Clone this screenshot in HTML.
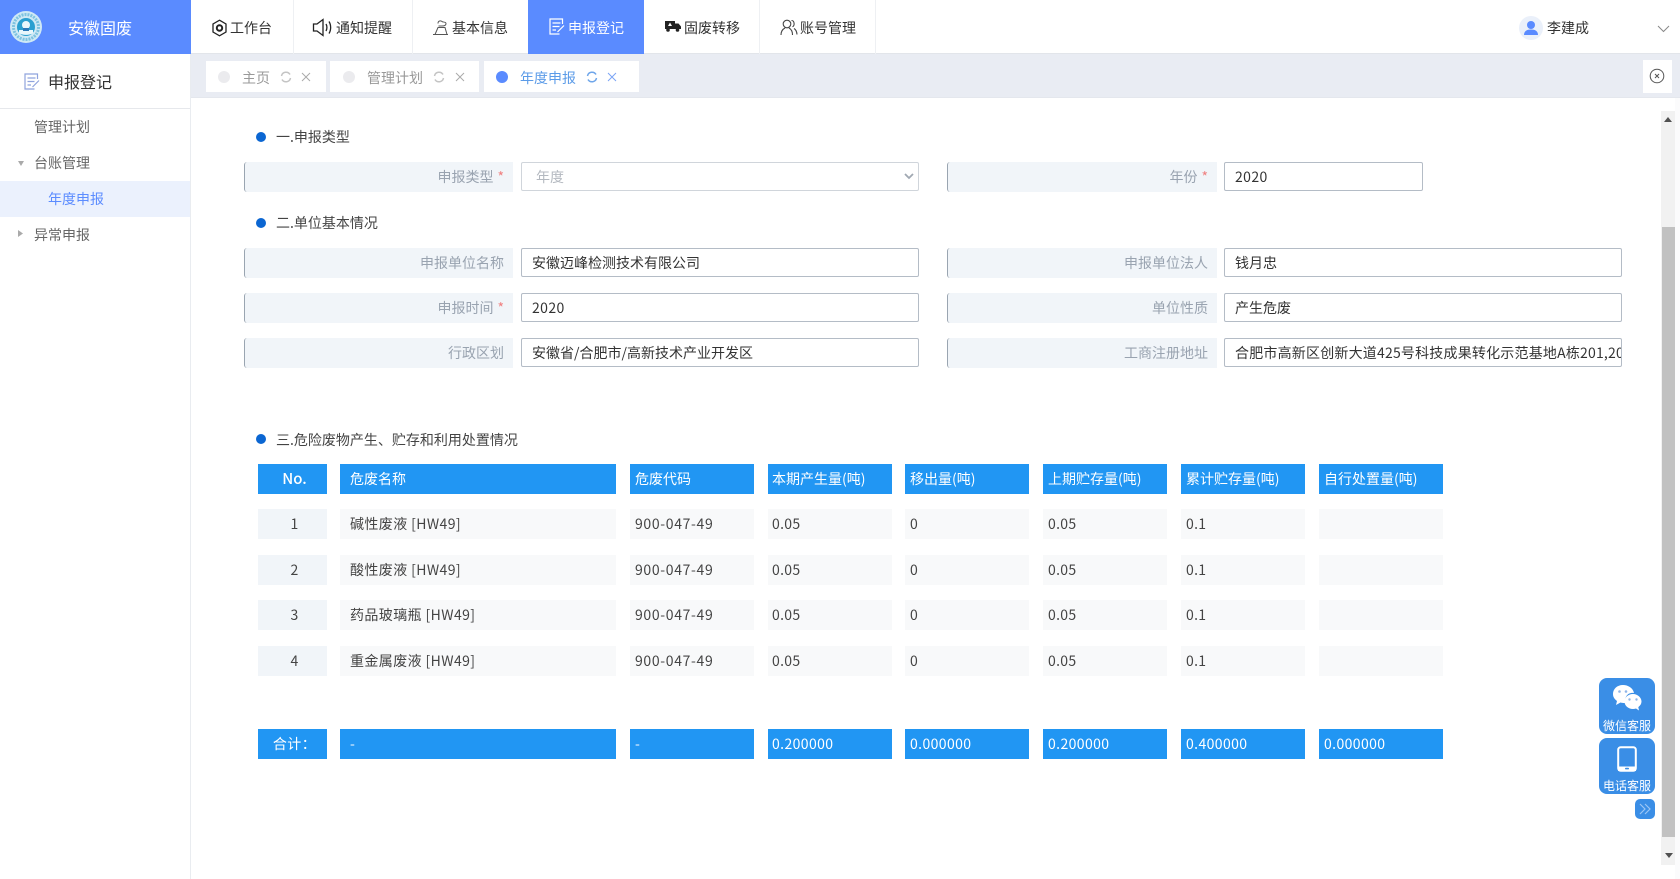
<!DOCTYPE html>
<html lang="zh-CN"><head><meta charset="utf-8"><title>申报登记</title>
<style>
*{box-sizing:border-box}
html,body{margin:0;padding:0;width:1680px;height:879px;overflow:hidden;background:#fff}
body{position:relative;font-family:"Noto Sans CJK SC","Liberation Sans",sans-serif;font-size:14px;color:#333}
.a{position:absolute;white-space:nowrap}
.t{line-height:20px;height:20px}
svg{position:absolute;display:block}
.sep{position:absolute;top:0;width:1px;height:54px;background:#eef0f3}
.nav{color:#333}
.tab{position:absolute;top:61px;height:31px;background:#fff}
.dot{position:absolute;top:71px;width:12px;height:12px;border-radius:50%;background:#ebebee}
.tt{color:#999;top:68px}
.sec{position:absolute;width:10px;height:10px;border-radius:50%;background:#0b66d2;left:256px}
.lb{position:absolute;height:30px;background:#f1f5f9;border-left:1px solid #9aa5b1;border-radius:3px 0 0 3px;text-align:right;padding-right:9px;line-height:31px;color:#99a3b0}
.lb i{font-style:normal;color:#f08080;margin-left:4px}
.in{position:absolute;height:29px;background:#fff;border:1px solid #b4bcc6;border-radius:2px;line-height:29px;padding-left:10px;color:#333;overflow:hidden;white-space:nowrap}
.num{letter-spacing:.4px}
.row{position:absolute;left:0;top:0;width:1500px;height:30px}
.row>div{position:absolute;top:0;height:30px;line-height:30px;overflow:hidden;white-space:nowrap}
.c0{left:258px;width:69px;text-align:center;padding-left:4px}
.c1{left:340px;width:276px;padding-left:10px}
.c2{left:630px;width:124px;padding-left:5px}
.c3{left:768px;width:124px;padding-left:4px}
.c4{left:905px;width:124px;padding-left:5px}
.c5{left:1043px;width:124px;padding-left:5px}
.c6{left:1181px;width:124px;padding-left:5px}
.c7{left:1319px;width:124px;padding-left:5px}
.h>div{background:#2196f3;color:#fff}
.b>div{background:#f8f9fa;color:#444;letter-spacing:.3px}
.b>.c0{background:#f1f5f9}
.b>.c1{letter-spacing:.4px}
.b>.c2{letter-spacing:.65px}
.fl{position:absolute;left:1599px;width:56px;height:56px;background:#3a8ee6;border-radius:8px;color:#fff;font-size:12px;text-align:center}
.fl span{position:absolute;left:0;right:0;top:39px;line-height:17px}
</style></head><body>

<!-- header -->
<div class="a" style="left:0;top:0;width:191px;height:54px;background:#5a8bff"></div>
<svg style="left:10px;top:11px" width="32" height="32" viewBox="0 0 32 32"><circle cx="16" cy="16" r="16" fill="#cfe9f5"/><circle cx="16" cy="16" r="12.5" fill="none" stroke="#7fc3e0" stroke-width="3" stroke-dasharray="2 1"/><circle cx="16" cy="16" r="9" fill="#2a9fd0"/><circle cx="16" cy="14" r="4" fill="#e8f6fb"/><path d="M9 19h14v3c-3 2.500-11 2.500-14 0z" fill="#e8f6fb"/><path d="M13 17h6v3h-6z" fill="#2a78b8"/></svg>
<div class="a t" style="left:68px;top:17px;font-size:16px;color:#fff;line-height:20px">安徽固废</div>
<div class="a" style="left:191px;top:0;width:1489px;height:54px;background:#fff;border-bottom:1px solid #e2e5ea"></div>
<div class="sep" style="left:293px"></div><div class="sep" style="left:412px"></div><div class="sep" style="left:759px"></div><div class="sep" style="left:875px"></div>
<div class="a" style="left:528px;top:0;width:116px;height:54px;background:#5a8bff"></div>

<svg style="left:211px;top:19px" width="17" height="18" viewBox="0 0 17 18" fill="none" stroke="#222"><path d="M8.500 1.200 15 5v8l-6.500 3.800L2 13V5z" stroke-width="1.300"/><circle cx="8.500" cy="9" r="2.700" stroke-width="2"/></svg>
<div class="a t nav" style="left:230px;top:18px">工作台</div>
<svg style="left:312px;top:18px" width="21" height="19" viewBox="0 0 21 19" fill="none" stroke="#222" stroke-width="1.300"><path d="M1.500 6h3.500l6-4.500v16L5 13H1.500z"/><path d="M14 6c1.200 2 1.200 5 0 7M17 3.500c2.200 3.500 2.200 8.500 0 12"/></svg>
<div class="a t nav" style="left:336px;top:18px">通知提醒</div>
<svg style="left:432px;top:18px" width="17" height="18" viewBox="0 0 17 18" fill="none" stroke="#555" stroke-width="1"><path d="M1 16.500h15M3 16.500 6 9.500h7l2 7M6 5.500c0-3 3-3 4-2s4 0 4 2-2 2.500-4 2.500H6.500"/></svg>
<div class="a t nav" style="left:452px;top:18px">基本信息</div>
<svg style="left:549px;top:18px" width="16" height="17" viewBox="0 0 16 17" fill="none" stroke="#fff" stroke-width="1.200"><path d="M13.500 6V1H1v15h9.500M3.500 5h8M3.500 8.500h7M3.500 12h3.500M8.500 14 15 7.500"/></svg>
<div class="a t" style="left:568px;top:18px;color:#fff">申报登记</div>
<svg style="left:664px;top:20px" width="17" height="12" viewBox="0 0 17 12"><path d="M1 1h10v8H1zM11 3.500h3.500L17 6.500V9h-6z" fill="#222"/><circle cx="4" cy="10" r="1.800" fill="#222"/><circle cx="13.500" cy="10" r="1.800" fill="#222"/><path d="M6 2.500 8 6H4z" fill="#fff"/></svg>
<div class="a t nav" style="left:684px;top:18px">固废转移</div>
<svg style="left:780px;top:19px" width="18" height="17" viewBox="0 0 18 17" fill="none" stroke="#444" stroke-width="1.100"><circle cx="7" cy="5" r="3.800"/><path d="M1 16c0-4 2-6 4-7M9 9c2 1 3.500 3 3.500 7M11.500 1.500c3 0 3.500 5 1 6.300M14 9.500c1.700 1 2.800 3 3 6"/></svg>
<div class="a t nav" style="left:800px;top:18px">账号管理</div>

<div class="a" style="left:1519px;top:16px;width:24px;height:24px;border-radius:50%;background:#eaf0fa"></div>
<svg style="left:1524px;top:20px" width="14" height="16" viewBox="0 0 14 16" fill="#5a8bff"><circle cx="7" cy="5" r="4"/><path d="M0 15c0-4 3-5.500 7-5.500s7 1.500 7 5.500z"/></svg>
<div class="a t" style="left:1547px;top:18px;color:#333">李建成</div>
<svg style="left:1657px;top:25px" width="13" height="8" viewBox="0 0 13 8" fill="none" stroke="#888"><path d="M1 1l5.500 5.500L12 1"/></svg>

<!-- tab bar -->
<div class="a" style="left:191px;top:54px;width:1489px;height:44px;background:#e9ecf3;border-bottom:1px solid #e4e7ed"></div>
<div class="tab" style="left:206px;width:120px"></div>
<div class="tab" style="left:330px;width:149px"></div>
<div class="tab" style="left:484px;width:155px"></div>
<div class="dot" style="left:218px"></div>
<div class="a t tt" style="left:242px">主页</div>
<svg style="left:280px;top:71px" width="12" height="12" viewBox="0 0 12 12" fill="none" stroke="#c4c4c4" stroke-width="1.500"><path d="M1.500 5A4.600 4.600 0 0 1 10 3.500M10.500 7A4.600 4.600 0 0 1 2 8.500"/></svg>
<svg style="left:301px;top:72px" width="10" height="10" viewBox="0 0 10 10" stroke="#aaa"><path d="M1 1l8 8M9 1l-8 8"/></svg>
<div class="dot" style="left:343px"></div>
<div class="a t tt" style="left:367px">管理计划</div>
<svg style="left:433px;top:71px" width="12" height="12" viewBox="0 0 12 12" fill="none" stroke="#c4c4c4" stroke-width="1.500"><path d="M1.500 5A4.600 4.600 0 0 1 10 3.500M10.500 7A4.600 4.600 0 0 1 2 8.500"/></svg>
<svg style="left:455px;top:72px" width="10" height="10" viewBox="0 0 10 10" stroke="#aaa"><path d="M1 1l8 8M9 1l-8 8"/></svg>
<div class="dot" style="left:496px;background:#5a8bff"></div>
<div class="a t tt" style="left:520px;color:#5b9be8">年度申报</div>
<svg style="left:586px;top:71px" width="12" height="12" viewBox="0 0 12 12" fill="none" stroke="#6fa6ea" stroke-width="1.500"><path d="M1.500 5A4.600 4.600 0 0 1 10 3.500M10.500 7A4.600 4.600 0 0 1 2 8.500"/></svg>
<svg style="left:607px;top:72px" width="10" height="10" viewBox="0 0 10 10" stroke="#7ba4f5"><path d="M1 1l8 8M9 1l-8 8"/></svg>
<div class="a" style="left:1643px;top:60px;width:29px;height:33px;background:#fff"></div>
<svg style="left:1649px;top:68px" width="16" height="16" viewBox="0 0 16 16" fill="none" stroke="#555"><circle cx="8" cy="8" r="6.800"/><path d="M6 6l4 4M10 6l-4 4"/></svg>

<!-- sidebar -->
<div class="a" style="left:190px;top:54px;width:1px;height:825px;background:#e9ecf0"></div>
<svg style="left:24px;top:73px" width="16" height="17" viewBox="0 0 16 17" fill="none" stroke="#8fa3dd" stroke-width="1.200"><path d="M13.500 6V1H1v15h9.500M3.500 5h8M3.500 8.500h7M3.500 12h3.500M8.500 14 15 7.500"/></svg>
<div class="a" style="left:48px;top:69px;font-size:16px;line-height:24px;color:#333">申报登记</div>
<div class="a" style="left:0;top:108px;width:190px;height:1px;background:#e6e8ec"></div>
<div class="a t" style="left:34px;top:117px;color:#666">管理计划</div>
<svg style="left:18px;top:161px" width="6" height="5" viewBox="0 0 6 5"><path d="M0 0h6L3 5z" fill="#aaa"/></svg>
<div class="a t" style="left:34px;top:153px;color:#666">台账管理</div>
<div class="a" style="left:0;top:181px;width:190px;height:36px;background:#ebf1fd"></div>
<div class="a t" style="left:48px;top:189px;color:#5b8cff">年度申报</div>
<svg style="left:18px;top:230px" width="5" height="7" viewBox="0 0 5 7"><path d="M0 0v7l5-3.500z" fill="#aaa"/></svg>
<div class="a t" style="left:34px;top:225px;color:#666">异常申报</div>

<!-- section 1 -->
<div class="sec" style="top:132px"></div>
<div class="a t" style="left:276px;top:127px;color:#444">一.申报类型</div>
<div class="lb" style="left:244px;top:162px;width:269px">申报类型<i>*</i></div>
<div class="in" style="left:521px;top:162px;width:398px;padding-left:14px;color:#b4b9c0;border-color:#d0d5db">年度</div>
<svg style="left:904px;top:173px" width="10" height="7" viewBox="0 0 10 7" fill="none" stroke="#a0a8b2" stroke-width="1.800"><path d="M1 1l4 4 4-4"/></svg>
<div class="lb" style="left:947px;top:162px;width:270px">年份<i>*</i></div>
<div class="in num" style="left:1224px;top:162px;width:199px">2020</div>

<!-- section 2 -->
<div class="sec" style="top:218px"></div>
<div class="a t" style="left:276px;top:213px;color:#444">二.单位基本情况</div>
<div class="lb" style="left:244px;top:248px;width:269px">申报单位名称</div>
<div class="in" style="left:521px;top:248px;width:398px">安徽迈峰检测技术有限公司</div>
<div class="lb" style="left:947px;top:248px;width:270px">申报单位法人</div>
<div class="in" style="left:1224px;top:248px;width:398px">钱月忠</div>
<div class="lb" style="left:244px;top:293px;width:269px">申报时间<i>*</i></div>
<div class="in num" style="left:521px;top:293px;width:398px">2020</div>
<div class="lb" style="left:947px;top:293px;width:270px">单位性质</div>
<div class="in" style="left:1224px;top:293px;width:398px">产生危废</div>
<div class="lb" style="left:244px;top:338px;width:269px">行政区划</div>
<div class="in" style="left:521px;top:338px;width:398px">安徽省/合肥市/高新技术产业开发区</div>
<div class="lb" style="left:947px;top:338px;width:270px">工商注册地址</div>
<div class="in" style="left:1224px;top:338px;width:398px;letter-spacing:.2px">合肥市高新区创新大道425号科技成果转化示范基地A栋201,203,204室</div>

<!-- section 3 -->
<div class="sec" style="top:434px"></div>
<div class="a t" style="left:276px;top:430px;color:#444">三.危险废物产生、贮存和利用处置情况</div>

<div class="row h" style="top:464px">
<div class="c0" style="font-weight:500;font-size:15px">No.</div><div class="c1">危废名称</div><div class="c2">危废代码</div><div class="c3">本期产生量(吨)</div><div class="c4">移出量(吨)</div><div class="c5">上期贮存量(吨)</div><div class="c6">累计贮存量(吨)</div><div class="c7">自行处置量(吨)</div>
</div>
<div class="row b" style="top:509px">
<div class="c0">1</div><div class="c1">碱性废液 [HW49]</div><div class="c2">900-047-49</div><div class="c3">0.05</div><div class="c4">0</div><div class="c5">0.05</div><div class="c6">0.1</div><div class="c7"></div>
</div>
<div class="row b" style="top:555px">
<div class="c0">2</div><div class="c1">酸性废液 [HW49]</div><div class="c2">900-047-49</div><div class="c3">0.05</div><div class="c4">0</div><div class="c5">0.05</div><div class="c6">0.1</div><div class="c7"></div>
</div>
<div class="row b" style="top:600px">
<div class="c0">3</div><div class="c1">药品玻璃瓶 [HW49]</div><div class="c2">900-047-49</div><div class="c3">0.05</div><div class="c4">0</div><div class="c5">0.05</div><div class="c6">0.1</div><div class="c7"></div>
</div>
<div class="row b" style="top:646px">
<div class="c0">4</div><div class="c1">重金属废液 [HW49]</div><div class="c2">900-047-49</div><div class="c3">0.05</div><div class="c4">0</div><div class="c5">0.05</div><div class="c6">0.1</div><div class="c7"></div>
</div>
<div class="row h" style="top:729px;letter-spacing:.4px">
<div class="c0">合计：</div><div class="c1">-</div><div class="c2">-</div><div class="c3">0.200000</div><div class="c4">0.000000</div><div class="c5">0.200000</div><div class="c6">0.400000</div><div class="c7">0.000000</div>
</div>

<!-- scrollbar -->
<div class="a" style="left:1675px;top:98px;width:5px;height:781px;background:#fbfbfc"></div>
<div class="a" style="left:1661px;top:111px;width:14px;height:754px;background:#f1f1f1"></div>
<div class="a" style="left:1662px;top:227px;width:13px;height:610px;background:#c1c1c1"></div>
<svg style="left:1664px;top:117px" width="8" height="6" viewBox="0 0 8 6"><path d="M4 0l4 5H0z" fill="#505050"/></svg>
<svg style="left:1665px;top:853px" width="8" height="6" viewBox="0 0 8 6"><path d="M0 0h8L4 5z" fill="#505050"/></svg>

<!-- floating -->
<div class="fl" style="top:678px">
<svg style="left:13px;top:6px" width="30" height="29" viewBox="0 0 30 29"><path d="M11 1C5 1 1 5 1 10c0 3 1.500 5 4 7l-1 4 4.500-2.500c1.500.4 3 .6 5 .5C12 13 16 8 22 9c-1-5-6-8-11-8z" fill="#fff"/><path d="M21 10c-5 0-8.500 3.500-8.500 7.500S16 25 21 25c1 0 2-.2 3-.5l3 2-.7-3.400c2-1.500 3.200-3.300 3.200-5.600 0-4-4-7.500-8.500-7.500z" fill="#fff"/><g fill="#8fb5e8"><circle cx="7.500" cy="7.500" r="1.300"/><circle cx="14" cy="7.500" r="1.300"/><circle cx="17.500" cy="15.500" r="1.200"/><circle cx="24.500" cy="15.500" r="1.200"/></g></svg>
<span>微信客服</span></div>
<div class="fl" style="top:738px">
<svg style="left:18px;top:8px" width="20" height="26" viewBox="0 0 20 26"><rect x="1.200" y="1.200" width="17.600" height="23.600" rx="2.500" fill="none" stroke="#fff" stroke-width="2"/><rect x="1" y="20.500" width="18" height="4.500" fill="#fff"/><rect x="8" y="21.800" width="4" height="1.600" rx=".8" fill="#3a8ee6"/></svg>
<span>电话客服</span></div>
<div class="a" style="left:1635px;top:799px;width:20px;height:20px;background:#3a8ee6;border-radius:5px"></div>
<svg style="left:1639px;top:803px" width="12" height="12" viewBox="0 0 12 12" fill="none" stroke="#9cc6f5" stroke-width="1.200"><path d="M1 1l5 5-5 5M6 1l5 5-5 5"/></svg>

</body></html>
